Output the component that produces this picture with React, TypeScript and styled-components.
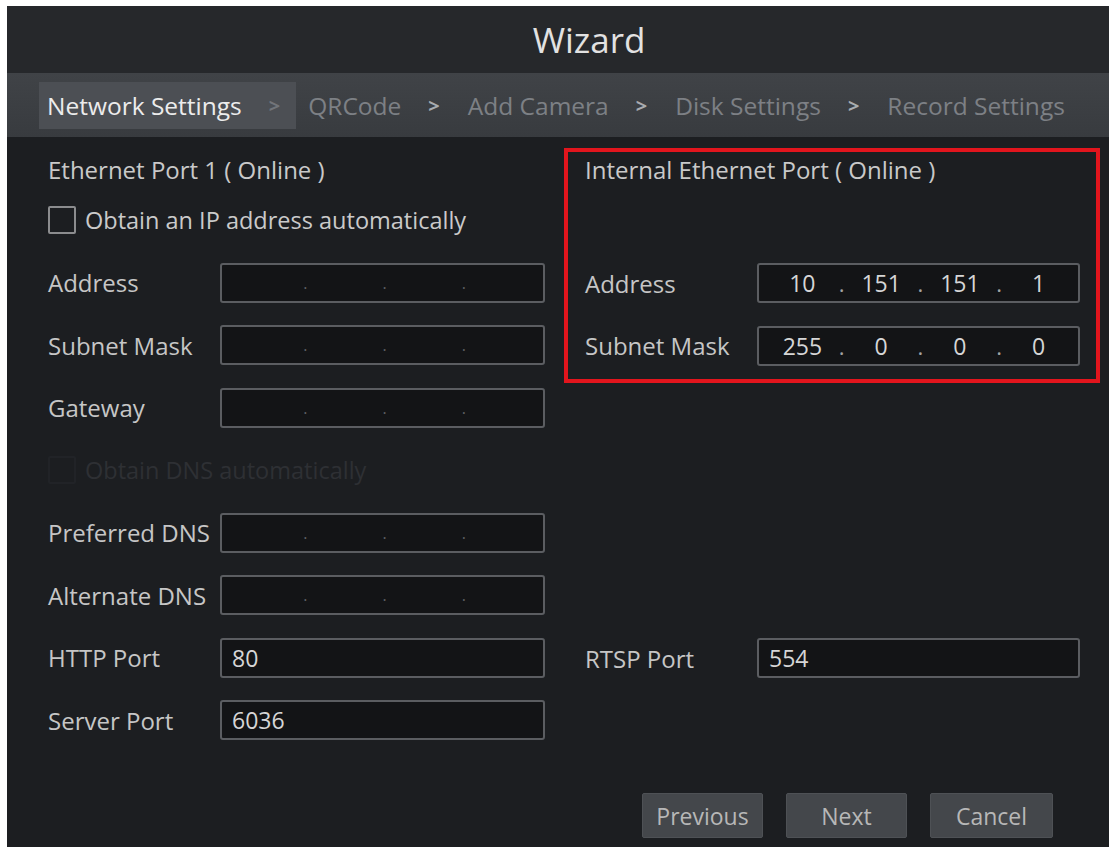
import React from 'react';
import styled, { createGlobalStyle } from 'styled-components';

const steps = ['Network Settings', 'QRCode', 'Add Camera', 'Disk Settings', 'Record Settings'];

const GlobalStyle = createGlobalStyle`
  html, body {
    margin: 0;
    padding: 0;
    background: #ffffff;
  }
  body {
    font-family: "Open Sans", "Noto Sans", sans-serif;
  }
`;

const Wizard = () => {
  return (
    <>
      <GlobalStyle />
      <Window>
        <TitleBar>Wizard</TitleBar>
        <StepBar>
          {steps.map((step, i) => (
            <Step key={step} active={i === 0}>
              <StepLabel active={i === 0}>{step}</StepLabel>
              {i < steps.length - 1 && <Chevron active={i === 0}>&gt;</Chevron>}
            </Step>
          ))}
        </StepBar>
        <Body>
          <Form>
            <LeftColumn>
              <Header>
                <SectionTitle>Ethernet Port 1 ( Online )</SectionTitle>
                <CheckRow>
                  <CheckBox />
                  <CheckText>Obtain an IP address automatically</CheckText>
                </CheckRow>
              </Header>
              <FieldRow>
                <Label>Address</Label>
                <IpField />
              </FieldRow>
              <FieldRow>
                <Label>Subnet Mask</Label>
                <IpField />
              </FieldRow>
              <FieldRow>
                <Label>Gateway</Label>
                <IpField />
              </FieldRow>
              <CheckRow>
                <CheckBox disabled />
                <CheckText disabled>Obtain DNS automatically</CheckText>
              </CheckRow>
              <FieldRow>
                <Label>Preferred DNS</Label>
                <IpField />
              </FieldRow>
              <FieldRow>
                <Label>Alternate DNS</Label>
                <IpField />
              </FieldRow>
              <FieldRow>
                <Label>HTTP Port</Label>
                <TextField>80</TextField>
              </FieldRow>
              <FieldRow>
                <Label>Server Port</Label>
                <TextField>6036</TextField>
              </FieldRow>
            </LeftColumn>
            <RightColumn>
              <Highlight>
                <BoxTitle>Internal Ethernet Port ( Online )</BoxTitle>
                <BoxRows>
                  <FieldRow>
                    <Label>Address</Label>
                    <IpField values={['10', '151', '151', '1']} />
                  </FieldRow>
                  <FieldRow>
                    <Label>Subnet Mask</Label>
                    <IpField values={['255', '0', '0', '0']} />
                  </FieldRow>
                </BoxRows>
              </Highlight>
              <PortRow>
                <FieldRow>
                  <Label>RTSP Port</Label>
                  <TextField>554</TextField>
                </FieldRow>
              </PortRow>
            </RightColumn>
          </Form>
          <Footer>
            <Button>Previous</Button>
            <Button>Next</Button>
            <Button wide>Cancel</Button>
          </Footer>
        </Body>
      </Window>
    </>
  );
};

// four octet boxes with dots between them
const IpField = ({ values }: { values?: string[] }) => {
  const octets = values || ['', '', '', ''];
  return (
    <IpBox>
      {octets.map((v, i) => (
        <React.Fragment key={i}>
          {i > 0 && <IpDot empty={!values}>.</IpDot>}
          <Octet>{v}</Octet>
        </React.Fragment>
      ))}
    </IpBox>
  );
};

const Window = styled.div`
  margin: 6px 0 0 7px;
  width: 1102px;
  height: 841px;
  background: #1c1e21;
  display: flex;
  flex-direction: column;
  overflow: hidden;
`;

const TitleBar = styled.div`
  height: 67px;
  padding-left: 62px;
  background: #26282b;
  display: flex;
  align-items: center;
  justify-content: center;
  color: #e2e2e2;
  font-size: 35px;
`;

const StepBar = styled.div`
  height: 64px;
  padding-left: 32px;
  background: linear-gradient(#404347, #383b3f);
  display: flex;
  align-items: center;
  gap: 4px;
`;

const Step = styled.div<{ active?: boolean }>`
  height: 47px;
  padding: 0 16px 0 8px;
  display: flex;
  align-items: center;
  gap: 27px;
  background: ${(p) => (p.active ? '#4c4f54' : 'transparent')};
`;

const StepLabel = styled.span<{ active?: boolean }>`
  font-size: 24.5px;
  color: ${(p) => (p.active ? '#ececec' : '#7d8085')};
  white-space: nowrap;
`;

const Chevron = styled.span<{ active?: boolean }>`
  font-size: 20px;
  font-weight: 700;
  color: ${(p) => (p.active ? '#72757a' : '#a9acb0')};
`;

const Body = styled.div`
  flex: 1;
  display: flex;
  flex-direction: column;
`;

const Form = styled.div`
  flex: 1;
  display: flex;
  gap: 19px;
  padding: 0 9px 0 41px;
`;

const LeftColumn = styled.div`
  width: 497px;
  padding-top: 13px;
  display: flex;
  flex-direction: column;
  gap: 22.5px;
`;

const Header = styled.div`
  display: flex;
  flex-direction: column;
  gap: 10px;
`;

const SectionTitle = styled.div`
  height: 40px;
  line-height: 40px;
  font-size: 24px;
  color: #c9c9c9;
  white-space: nowrap;
`;

const CheckRow = styled.div`
  height: 40px;
  display: flex;
  align-items: center;
  gap: 9px;
`;

const CheckBox = styled.span<{ disabled?: boolean }>`
  width: 28px;
  height: 28px;
  box-sizing: border-box;
  border: 2px solid ${(p) => (p.disabled ? '#212327' : '#8b8c8e')};
  border-radius: 2px;
`;

const CheckText = styled.span<{ disabled?: boolean }>`
  font-size: 23.5px;
  color: ${(p) => (p.disabled ? '#2e3034' : '#cacaca')};
  white-space: nowrap;
`;

const FieldRow = styled.div`
  height: 40px;
  display: flex;
  align-items: center;
`;

const Label = styled.span`
  width: 172px;
  flex-shrink: 0;
  font-size: 24px;
  color: #c6c6c6;
  white-space: nowrap;
`;

const fieldBase = `
  flex: 1;
  height: 40px;
  box-sizing: border-box;
  border: 2px solid #5b5d61;
  border-radius: 3px;
  background: #131416;
  color: #d6d6d6;
  font-size: 23px;
`;

const TextField = styled.div`
  ${fieldBase}
  display: flex;
  align-items: center;
  padding-left: 10px;
`;

const IpBox = styled.div`
  ${fieldBase}
  display: flex;
  align-items: center;
  padding: 0 0 0 4px;
`;

const Octet = styled.span`
  flex: 1;
  text-align: center;
`;

const IpDot = styled.span<{ empty?: boolean }>`
  width: 0;
  display: flex;
  justify-content: center;
  color: ${(p) => (p.empty ? '#5e6064' : '#a3a3a3')};
  font-size: ${(p) => (p.empty ? '16px' : '22px')};
`;

const RightColumn = styled.div`
  flex: 1;
  padding-top: 11px;
  display: flex;
  flex-direction: column;
`;

const Highlight = styled.div`
  border: 4px solid #e2151d;
  padding: 0 16px 13.5px 17px;
  display: flex;
  flex-direction: column;
`;

const BoxTitle = styled.div`
  height: 36px;
  line-height: 36px;
  font-size: 24px;
  color: #c9c9c9;
  white-space: nowrap;
`;

const BoxRows = styled.div`
  margin-top: 75px;
  display: flex;
  flex-direction: column;
  gap: 22.5px;
`;

const PortRow = styled.div`
  margin-top: 255px;
  padding: 0 20px 0 21px;
`;

const Footer = styled.div`
  display: flex;
  justify-content: flex-end;
  gap: 23px;
  padding: 0 56px 9px 0;
`;

const Button = styled.button<{ wide?: boolean }>`
  width: ${(p) => (p.wide ? '123px' : '121px')};
  height: 45px;
  border: 1px solid #4e5155;
  border-radius: 2px;
  background: #44474b;
  color: #b7b7b7;
  font-family: inherit;
  font-size: 23px;
  padding: 0;
`;

export default Wizard;
